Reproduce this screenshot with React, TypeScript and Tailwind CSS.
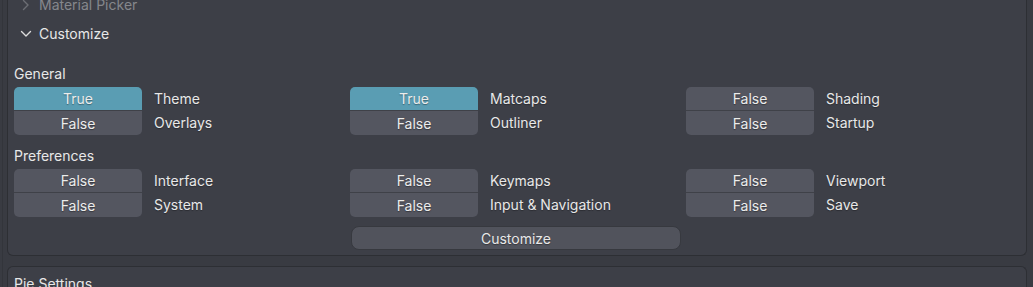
import React from "react";

const font = { fontFamily: "Inter, 'Noto Sans', 'DejaVu Sans', sans-serif" };

function Chevron({ down, color }: { down?: boolean; color: string }) {
  return down ? (
    <svg width="12" height="8" viewBox="0 0 12 8" className="block">
      <path d="M1.5 1.5 L6 6 L10.5 1.5" fill="none" stroke={color} strokeWidth="1.4" strokeLinecap="round" strokeLinejoin="round" />
    </svg>
  ) : (
    <svg width="8" height="12" viewBox="0 0 8 12" className="block">
      <path d="M1.5 1.5 L6 6 L1.5 10.5" fill="none" stroke={color} strokeWidth="1.4" strokeLinecap="round" strokeLinejoin="round" />
    </svg>
  );
}

function Pair({ items }: { items: [boolean, string][] }) {
  return (
    <div className="flex flex-col">
      {items.map(([v, label], i) => (
        <div key={i} className="flex items-center">
          <div
            className={
              "w-[128px] flex items-center justify-center text-[#ececec] " +
              (i === 0 ? "h-[23px] rounded-t-[5px] " : "h-[25px] rounded-b-[5px] border-t border-[#3f4148] ") +
              (v ? "bg-[#5a9db3]" : "bg-[#545660]")
            }
            style={{ textShadow: "0 1px 1px rgba(0,0,0,0.35)" }}
          >
            {v ? "True" : "False"}
          </div>
          <div className="ml-[12px] text-[#e8e8e8]" style={{ textShadow: "0 1px 1px rgba(0,0,0,0.3)" }}>{label}</div>
        </div>
      ))}
    </div>
  );
}

export default function App() {
  return (
    <div className="w-[1033px] h-[287px] overflow-hidden bg-[#393b42] flex text-[14px]" style={font}>
      <div className="w-[2px] shrink-0" />
      <div className="w-[1px] shrink-0 bg-[#33353b]" />
      <div className="w-[4px] shrink-0" />
      <div className="flex-1 flex flex-col">
        <div className="shrink-0 h-[257px] -mt-[1px] border-x border-b border-[#2d2f34] rounded-b-[6px] bg-[#3d3f47] flex flex-col">
          <div className="shrink-0 h-[29px] -mt-[9px] flex items-center">
            <div className="w-[14px]" />
            <Chevron color="#6c6e74" />
            <span className="ml-[9px] text-[#85878c]">Material Picker</span>
          </div>
          <div className="shrink-0 h-[29px] flex items-center">
            <div className="w-[12px]" />
            <Chevron down color="#dcdcdc" />
            <span className="ml-[7px] text-[#e8e8e8]">Customize</span>
          </div>
          <div className="shrink-0 pl-[6px] pt-[15px]">
            <div className="h-[20px] flex items-center text-[#e8e8e8]">General</div>
            <div className="mt-[4px] grid grid-cols-[336px_336px_336px]">
              <Pair items={[[true, "Theme"], [false, "Overlays"]]} />
              <Pair items={[[true, "Matcaps"], [false, "Outliner"]]} />
              <Pair items={[[false, "Shading"], [false, "Startup"]]} />
            </div>
            <div className="mt-[10px] h-[20px] flex items-center text-[#e8e8e8]">Preferences</div>
            <div className="mt-[4px] grid grid-cols-[336px_336px_336px]">
              <Pair items={[[false, "Interface"], [false, "System"]]} />
              <Pair items={[[false, "Keymaps"], [false, "Input & Navigation"]]} />
              <Pair items={[[false, "Viewport"], [false, "Save"]]} />
            </div>
          </div>
          <div className="shrink-0 mt-[9px] flex justify-center pr-[2px]">
            <div
              className="w-[330px] h-[24px] rounded-[8px] bg-[#51535c] border border-[#37393f] flex items-center justify-center text-[#e8e8e8]"
              style={{ textShadow: "0 1px 1px rgba(0,0,0,0.35)" }}
            >
              Customize
            </div>
          </div>
        </div>
        <div className="shrink-0 mt-[10px] h-[40px] border-x border-t border-[#2d2f34] rounded-t-[6px] bg-[#3d3f47] pl-[6px] pt-[6px] text-[#e8e8e8]">
          Pie Settings
        </div>
      </div>
      <div className="w-[6px] shrink-0" />
    </div>
  );
}
